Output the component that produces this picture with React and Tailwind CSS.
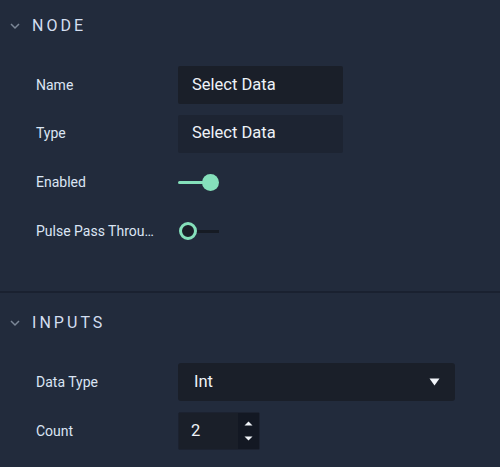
import React from "react";

const Chevron = () => (
  <svg width="12" height="8" viewBox="0 0 12 8" className="shrink-0">
    <path d="M2 2 L6 6 L10 2" fill="none" stroke="#7c8797" strokeWidth="1.5" />
  </svg>
);

const Header = ({ title }) => (
  <div className="flex items-center h-[52px] pl-[9px]">
    <Chevron />
    <span className="ml-[11px] text-[16px] tracking-[0.19em] text-[#d3def0] font-normal">{title}</span>
  </div>
);

const Row = ({ label, children }) => (
  <div className="flex items-center h-[38px]">
    <div className="w-[178px] shrink-0 pl-[36px] pr-[22px] text-[14px] text-[#dbe5f4] truncate">{label}</div>
    {children}
  </div>
);

const TextBox = ({ value, bg }) => (
  <div className={`w-[165px] h-[38px] flex items-center pl-[14px] text-[16.5px] text-[#eef2f8] rounded-[2px] ${bg}`}>
    {value}
  </div>
);

export default function App() {
  return (
    <div className="w-[500px] h-[467px] bg-[#222b3c] overflow-hidden" style={{ fontFamily: "Roboto, 'Liberation Sans', sans-serif" }}>
      <div className="pb-[41px]">
        <Header title="NODE" />
        <div className="flex flex-col gap-[10.7px] mt-[14px]">
          <Row label="Name">
            <TextBox value="Select Data" bg="bg-[#1a1f29]" />
          </Row>
          <Row label="Type">
            <TextBox value="Select Data" bg="bg-[#1d2432]" />
          </Row>
          <Row label="Enabled">
            <div className="flex items-center">
              <div className="w-[26px] h-[3px] bg-[#85e0bb] rounded-full" />
              <div className="w-[17px] h-[17px] rounded-full bg-[#85e0bb] -ml-[2px]" />
            </div>
          </Row>
          <Row label="Pulse Pass Through">
            <div className="flex items-center pl-[1px]">
              <div className="w-[18px] h-[18px] rounded-full border-[3px] border-[#85e0bb] bg-[#1a1f29] relative z-10" />
              <div className="w-[23px] h-[3px] bg-[#161b24] -ml-[1px]" />
            </div>
          </Row>
        </div>
      </div>
      <div className="h-[2px] bg-[#1a2130]" />
      <div className="mt-[4px]">
        <Header title="INPUTS" />
        <div className="flex flex-col gap-[11px] mt-[14px]">
          <Row label="Data Type">
            <div className="w-[277px] h-[38px] flex items-center justify-between pl-[16px] pr-[15px] bg-[#1a1f29] rounded-[3px] text-[16.5px] text-[#eef2f8]">
              <span>Int</span>
              <svg width="11" height="8" viewBox="0 0 11 8">
                <path d="M0.5 0.5 H10.5 L5.5 7.5 Z" fill="#f2f5fa" />
              </svg>
            </div>
          </Row>
          <Row label="Count">
            <div className="w-[82px] h-[38px] flex bg-[#1a1f29] border border-[#1c2230] rounded-[2px]">
              <div className="flex-1 flex items-center pl-[12px] text-[16.5px] text-[#eef2f8]">2</div>
              <div className="w-[21px] bg-[#131823] flex flex-col items-center justify-between py-[8px]">
                <svg width="9" height="5" viewBox="0 0 9 5"><path d="M0.5 4.5 H8.5 L4.5 0.5 Z" fill="#f2f5fa" /></svg>
                <svg width="9" height="5" viewBox="0 0 9 5"><path d="M0.5 0.5 H8.5 L4.5 4.5 Z" fill="#f2f5fa" /></svg>
              </div>
            </div>
          </Row>
        </div>
      </div>
    </div>
  );
}
